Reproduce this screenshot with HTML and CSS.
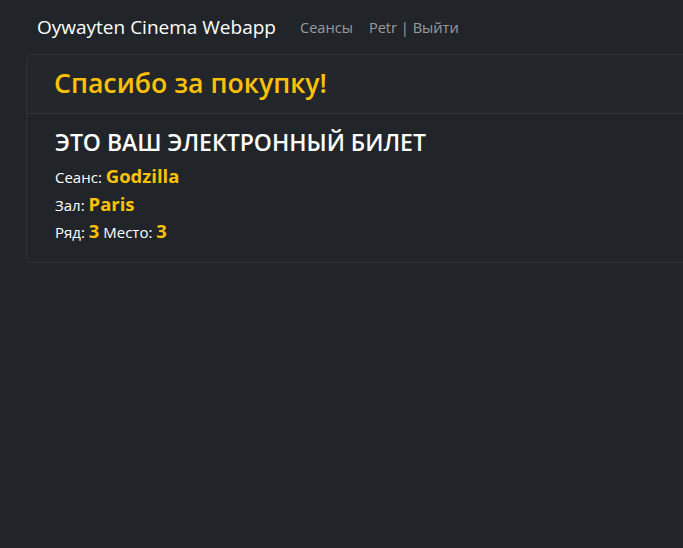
FILE: index.html
```html
<!DOCTYPE html>
<html lang="ru">
<head>
<meta charset="utf-8">
<title>Oywayten Cinema Webapp</title>
<link rel="stylesheet" href="styles.css">
</head>
<body>
<nav class="navbar">
  <a class="brand" href="#">Oywayten Cinema Webapp</a>
  <ul class="nav">
    <li><a class="nav-link" href="#">Сеансы</a></li>
    <li><a class="nav-link" href="#">Petr | Выйти</a></li>
  </ul>
</nav>
<main class="container">
  <div class="card">
    <div class="card-header">
      <h3 class="title">Спасибо за покупку!</h3>
    </div>
    <div class="card-body">
      <h4 class="subtitle">ЭТО ВАШ ЭЛЕКТРОННЫЙ БИЛЕТ</h4>
      <p class="line">Сеанс: <span class="val">Godzilla</span></p>
      <p class="line">Зал: <span class="val">Paris</span></p>
      <p class="line">Ряд: <span class="val">3</span> Место: <span class="val">3</span></p>
    </div>
  </div>
</main>
</body>
</html>
```
FILE: styles.css
```css
* { box-sizing: border-box; }
html, body {
  margin: 0;
  background: #212529;
  color: #dee2e6;
  font-family: "Open Sans", "Noto Sans", sans-serif;
  font-size: 15px;
}
a { text-decoration: none; }
.navbar {
  display: flex;
  align-items: center;
  height: 53px;
  padding: 1px 0 0 37px;
}
.brand {
  color: #fff;
  font-size: 19px;
  margin-right: 16px;
  line-height: 1;
}
.nav {
  display: flex;
  list-style: none;
  margin: 0;
  padding: 0;
}
.nav-link {
  display: block;
  padding: 0 8px;
  color: rgba(255,255,255,0.55);
  font-size: 14.6px;
}
.container {
  padding-left: 26px;
}
.card {
  border: 1px solid rgba(255,255,255,0.06);
  border-right: none;
  border-radius: 6px 0 0 6px;
  margin-top: 1px;
}
.card-header {
  padding: 11px 27px 0;
  height: 59px;
  border-bottom: 1px solid rgba(255,255,255,0.07);
  background: rgba(255,255,255,0.01);
}
.title {
  margin: 0;
  color: #ffc107;
  font-size: 26.7px;
  font-weight: 600;
  line-height: 34px;
}
.card-body {
  padding: 13px 28px 0;
  height: 148px;
}
.subtitle {
  margin: 0 0 7px;
  color: #fff;
  font-size: 23px;
  font-weight: 600;
  line-height: 30px;
}
.line {
  margin: 0;
  font-size: 15px;
  line-height: 27.5px;
  height: 27.5px;
  color: #fff;
}
.val {
  color: #ffc107;
  font-weight: 700;
  font-size: 18.5px;
  line-height: 1;
}
```
